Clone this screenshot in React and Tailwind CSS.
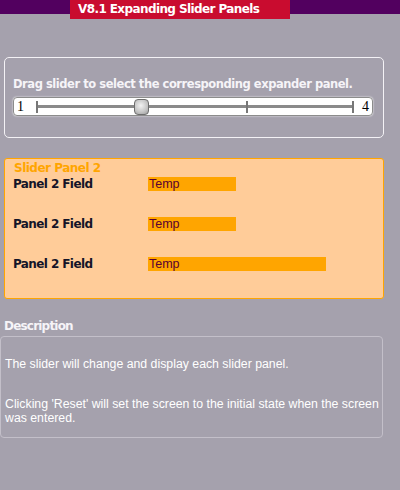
export default function App() {
  const fields = [88, 88, 178];
  return (
    <div className="w-[400px] h-[490px] bg-[#a5a1ad] flex flex-col overflow-hidden">
      <div className="h-[14px] bg-[#52005f] w-full flex shrink-0">
        <div className="ml-[70px] w-[220px] h-[19px] bg-[#c90c2f] pl-[8px] text-white font-bold text-[12px] leading-[19px] font-['DejaVu_Sans',sans-serif] tracking-[-0.6px] z-10">
          V8.1 Expanding Slider Panels
        </div>
      </div>
      <div className="mt-[43px] ml-[4px] w-[380px] h-[81px] border border-[#f4f2f6] rounded-[5px] px-[8px] pt-[19px] shrink-0">
        <div className="text-[#f6f4f8] font-bold text-[11.5px] leading-[14px] font-['DejaVu_Sans',sans-serif] tracking-[-0.45px]">
          Drag slider to select the corresponding expander panel.
        </div>
        <div className="mt-[6px] w-[360px] h-[19px] bg-white rounded-[4px] border border-[#8c8c8c] shadow-[0_0_2px_#ffffff] flex items-center font-['Liberation_Serif',serif] text-[14px] text-black px-[3px]">
          <span className="leading-none w-[19px]">1</span>
          <div className="flex-1 relative flex h-[12px]">
            <div className="flex-[2] flex items-center border-l-2 border-[#777]">
              <div className="h-[3px] w-full bg-[#8a8a8a]" />
            </div>
            <div className="flex-[1] flex items-center border-l-2 border-r-2 border-[#777]">
              <div className="h-[3px] w-full bg-[#8a8a8a]" />
            </div>
            <div className="absolute left-[98px] -top-[2px] w-[15px] h-[16px] rounded-[4px] border border-[#6e6e6e] bg-[radial-gradient(circle_at_45%_40%,#f2f2f2,#c4c4c4_60%,#9a9a9a)]" />
          </div>
          <span className="leading-none w-[15px] text-right">4</span>
        </div>
      </div>
      <div className="mt-[20px] ml-[4px] w-[380px] h-[141px] bg-[#ffcc99] border border-[#ffa500] rounded-[3px] pl-[9px] pt-[2px] flex flex-col shrink-0">
        <div className="text-[#ffa500] font-bold text-[12px] leading-[14px] font-['DejaVu_Sans',sans-serif] tracking-[-0.5px]">Slider Panel 2</div>
        <div className="mt-[2px] flex flex-col gap-[26px]">
          {fields.map((w, i) => (
            <div key={i} className="flex items-center h-[14px]">
              <span className="w-[135px] -ml-[1px] text-[#141428] font-bold text-[12px] leading-[14px] font-['DejaVu_Sans',sans-serif] tracking-[-0.6px]">Panel 2 Field</span>
              <span style={{ width: w }} className="h-[14px] bg-[#ffa500] text-[#5a0032] text-[12.5px] leading-[14px] pl-[1px] font-['Liberation_Sans',sans-serif]">Temp</span>
            </div>
          ))}
        </div>
      </div>
      <div className="mt-[20px] ml-[4px] text-[#f6f4f8] font-bold text-[12px] leading-[14px] font-['DejaVu_Sans',sans-serif] tracking-[-0.8px]">Description</div>
      <div className="mt-[3px] w-[383px] h-[102px] border border-[#c3bfc9] rounded-[4px] pl-[4px] pt-[20px] text-white text-[12.3px] leading-[14px] font-['Liberation_Sans',sans-serif] shrink-0">
        <p>The slider will change and display each slider panel.</p>
        <p className="mt-[26px]">Clicking 'Reset' will set the screen to the initial state when the screen was entered.</p>
      </div>
    </div>
  );
}
